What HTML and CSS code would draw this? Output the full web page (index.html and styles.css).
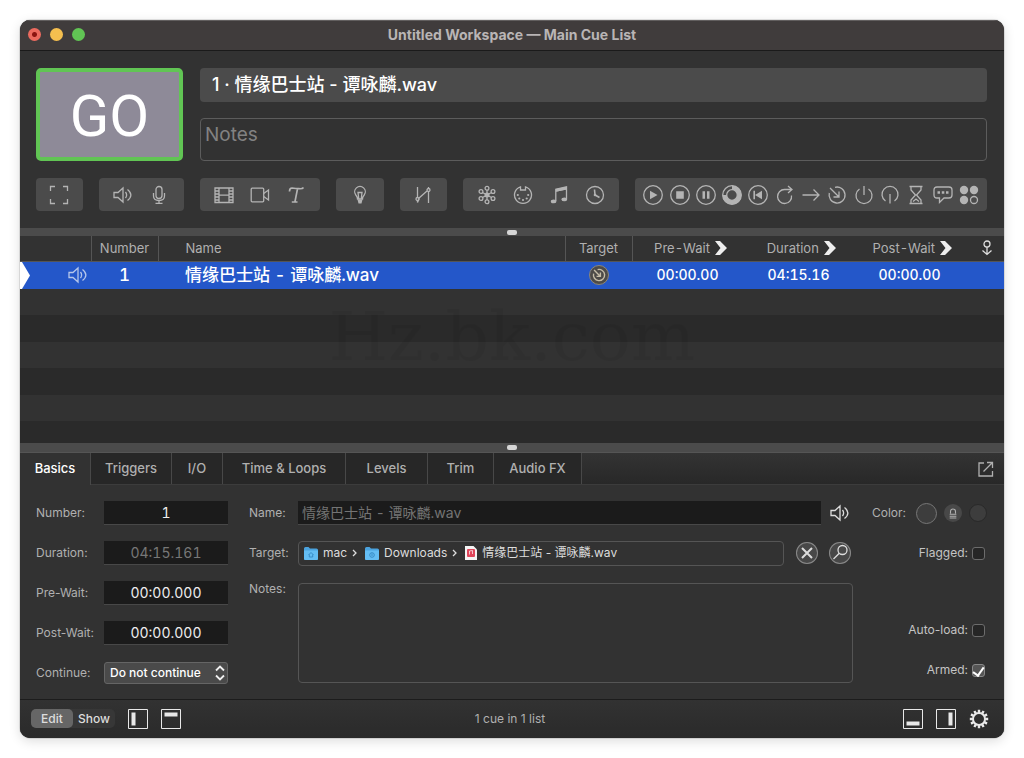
FILE: index.html
```html
<!DOCTYPE html>
<html lang="en">
<head>
<meta charset="utf-8">
<title>Untitled Workspace — Main Cue List</title>
<link rel="stylesheet" href="styles.css">
</head>
<body>
<svg class="defs" width="0" height="0" aria-hidden="true">
  <symbol id="speaker" viewBox="0 0 20 20"><path d="M1 7.500H5L10 3V17L5 12.500H1Z"/><path d="M12.500 7C14 9 14 11 12.500 13M14.500 4.500C19 8 19 12 14.500 15.500"/></symbol>
  <symbol id="target" viewBox="0 0 20 20"><path d="M8 2.300A8 8 0 1 1 2.300 8M3 3L12 12M12 6.500V12H6.500"/></symbol>
  <symbol id="chevron" viewBox="0 0 12 14"><path d="M0 0H5L12 7L5 14H0L5.500 7Z"/></symbol>
  <symbol id="folder" viewBox="0 0 14 13"><path d="M0 1.500Q0 0 1.500 0H4.500L6 1.500H12.500Q14 1.500 14 3V11.500Q14 13 12.500 13H1.500Q0 13 0 11.500Z" fill="#4ba3de"/><path d="M0 3.500H14V11.500Q14 13 12.500 13H1.500Q0 13 0 11.500Z" fill="#64bdf3"/></symbol>
</svg>
<main class="window">
  <header class="titlebar">
    <div class="lights">
      <button class="light close" aria-label="Close"></button>
      <button class="light minimize" aria-label="Minimize"></button>
      <button class="light zoom" aria-label="Zoom"></button>
    </div>
    <h1 class="title">Untitled Workspace — Main Cue List</h1>
  </header>

  <section class="transport">
    <button class="go">GO</button>
    <div class="standby">
      <div class="standby-name">1 · 情缘巴士站 - 谭咏麟.wav</div>
      <textarea class="standby-notes" placeholder="Notes" aria-label="Standby notes"></textarea>
    </div>
  </section>

  <nav class="toolbar" aria-label="Cue types">
    <div class="group g1">
      <button class="tool" aria-label="Group"><svg class="icon" viewBox="0 0 20 20"><path d="M1.500 6V1.500H6M14 1.500H18.500V6M18.500 14V18.500H14M6 18.500H1.500V14"/></svg></button>
    </div>
    <div class="group g2">
      <button class="tool" aria-label="Audio"><svg class="icon"><use href="#speaker"/></svg></button>
      <button class="tool" aria-label="Mic"><svg class="icon" viewBox="0 0 20 20"><rect x="7" y="1.500" width="6" height="12" rx="3"/><path d="M4.500 8V11Q4.500 15.500 10 15.500T15.500 11V8M10 15.500V18M6.500 18.300H13.500"/></svg></button>
    </div>
    <div class="group g3">
      <button class="tool" aria-label="Video"><svg class="icon" viewBox="0 0 20 20"><path d="M1 3H19V17.500H1ZM5 3V17.500M15 3V17.500M5 10.200H15M1 6H5M1 9H5M1 12H5M1 15H5M15 6H19M15 9H19M15 12H19M15 15H19"/></svg></button>
      <button class="tool" aria-label="Camera"><svg class="icon" viewBox="0 0 20 20"><rect x="1.200" y="3.200" width="12.500" height="13.600" rx="1"/><path d="M13.700 8.500L18.500 5V15L13.700 11.500"/></svg></button>
      <button class="tool" aria-label="Text"><svg class="icon" viewBox="0 0 20 20"><path stroke-width="1.700" d="M3.500 6.500Q3.500 3 6 3Q10 3.500 13 3.700Q16.500 4 17.500 2.500M11.500 3.800L9 16.500M5.800 17H11.500"/></svg></button>
    </div>
    <div class="group g4">
      <button class="tool" aria-label="Light"><svg class="icon" viewBox="0 0 20 20"><path d="M7.500 14Q7.500 12 5.800 10A5.300 5.300 0 1 1 14.200 10Q12.500 12 12.500 14ZM8.800 14L8 7.500H12L11.200 14"/><path class="solid" d="M7.500 14.500H12.500L11.500 18.500H8.500Z"/></svg></button>
    </div>
    <div class="group g5">
      <button class="tool" aria-label="Fade"><svg class="icon" viewBox="0 0 20 20"><path d="M4.500 2V12.500M5.500 13.500L14 6M15.500 7V18"/><circle cx="4.500" cy="14" r="1.500"/><circle cx="15.500" cy="5" r="1.500"/><path d="M4.500 15.500V17.500L6 14M15.500 3.500V2"/></svg></button>
    </div>
    <div class="group g6">
      <button class="tool" aria-label="Network"><svg class="icon" viewBox="0 0 20 20"><circle class="solid" cx="10" cy="10" r="2.500"/><path d="M10 5V15M5.500 7.500L14.500 12.500M5.500 12.500L14.500 7.500"/><circle cx="10" cy="3.200" r="1.900"/><circle cx="10" cy="16.800" r="1.900"/><circle cx="4" cy="6.500" r="1.900"/><circle cx="16" cy="6.500" r="1.900"/><circle cx="4" cy="13.500" r="1.900"/><circle cx="16" cy="13.500" r="1.900"/></svg></button>
      <button class="tool" aria-label="MIDI"><svg class="icon" viewBox="0 0 20 20"><path d="M7.500 1.800A8.500 8.500 0 1 0 12.500 1.800V5H7.500Z"/><g class="solid"><circle cx="4.800" cy="10" r="1.100"/><circle cx="15.200" cy="10" r="1.100"/><circle cx="6.300" cy="13.500" r="1.100"/><circle cx="13.700" cy="13.500" r="1.100"/><circle cx="10" cy="15" r="1.100"/></g></svg></button>
      <button class="tool" aria-label="MIDI file"><svg class="icon" viewBox="0 0 20 20"><path d="M6.800 16V4.200L17.500 1.800V14M6.800 6L17.500 3.800"/><path class="solid" d="M6.800 4L17.500 1.700V4.500L6.800 6.800Z"/><ellipse class="solid" cx="4.600" cy="16.400" rx="2.800" ry="1.900"/><ellipse class="solid" cx="15.300" cy="14.400" rx="2.800" ry="1.900"/></svg></button>
      <button class="tool" aria-label="Timecode"><svg class="icon" viewBox="0 0 20 20"><circle cx="10" cy="10" r="8.500"/><path stroke-width="1.600" d="M9.500 4.500L10 10L14.500 12.500"/><circle class="solid" cx="10" cy="10" r="1.300"/></svg></button>
    </div>
    <div class="group g7">
      <button class="tool" aria-label="Start"><svg class="icon" viewBox="0 0 20 20"><circle cx="10" cy="10" r="9.300"/><path class="solid" d="M7 5.700L14.500 10L7 14.300Z"/></svg></button>
      <button class="tool" aria-label="Stop"><svg class="icon" viewBox="0 0 20 20"><circle cx="10" cy="10" r="9.300"/><path class="solid" d="M6.200 6.200H13.800V13.800H6.200Z"/></svg></button>
      <button class="tool" aria-label="Pause"><svg class="icon" viewBox="0 0 20 20"><circle cx="10" cy="10" r="9.300"/><path class="solid" d="M6.500 6.200H9V13.800H6.500ZM11 6.200H13.500V13.800H11Z"/></svg></button>
      <button class="tool" aria-label="Load"><svg class="icon" viewBox="0 0 20 20"><circle cx="10" cy="10" r="9.300"/><circle cx="10" cy="10" r="5.300"/><path stroke-width="4.200" d="M10 2.600A7.400 7.400 0 1 1 2.600 10"/></svg></button>
      <button class="tool" aria-label="Reset"><svg class="icon" viewBox="0 0 20 20"><circle cx="10" cy="10" r="9.300"/><path class="solid" d="M14 5.700V14.300L7 10Z"/><path stroke-width="1.600" d="M6.200 5.700V14.300"/></svg></button>
      <button class="tool" aria-label="Devamp"><svg class="icon" viewBox="0 0 20 20"><path d="M16.500 10.500A7 7 0 1 1 9.500 4.500H17M13 1L17 4.500L13 8"/></svg></button>
      <button class="tool" aria-label="GoTo"><svg class="icon" viewBox="0 0 20 20"><path d="M1.500 10H18M12.500 4.500L18 10L12.500 15.500"/></svg></button>
      <button class="tool" aria-label="Target"><svg class="icon"><use href="#target"/></svg></button>
      <button class="tool" aria-label="Arm"><svg class="icon" viewBox="0 0 20 20"><path d="M5.500 4A8 8 0 1 0 14.500 4M10 1V10"/></svg></button>
      <button class="tool" aria-label="Disarm"><svg class="icon" viewBox="0 0 20 20"><path d="M5.500 16A8 8 0 1 1 14.500 16M10 9V18.500"/></svg></button>
      <button class="tool" aria-label="Wait"><svg class="icon" viewBox="0 0 20 20"><path d="M3.500 1.500H16.500M5 1.500V5L9.500 10L5 15V18.500M15 1.500V5L10.500 10L15 15V18.500M3.500 18.500H16.500M7 16.500L10 14L13 16.500"/></svg></button>
      <button class="tool" aria-label="Memo"><svg class="icon" viewBox="0 0 20 20"><path d="M4 2H16Q19 2 19 5V10Q19 13 16 13H11L6.500 17.500V13H4Q1 13 1 10V5Q1 2 4 2Z"/><path stroke-width="2.500" d="M4.500 7.500H7M8.800 7.500H11.300M13 7.500H15.500"/></svg></button>
      <button class="tool" aria-label="Script"><svg class="icon" viewBox="0 0 20 20"><g class="solid"><circle cx="5" cy="5" r="4.200"/><circle cx="15" cy="5" r="4.200"/><circle cx="5" cy="15" r="4.200"/></g><circle cx="15" cy="15" r="3.500"/></svg></button>
    </div>
  </nav>

  <div class="splitter"><span class="grip"></span></div>

  <section class="cues">
    <table class="cue-table">
      <colgroup><col class="c-status"><col class="c-num"><col><col class="c-num"><col class="c-time"><col class="c-time"><col class="c-time"><col class="c-flag"></colgroup>
      <thead>
        <tr>
          <th class="ruled" aria-label="Status"></th>
          <th class="ruled">Number</th>
          <th class="ruled name">Name</th>
          <th class="ruled">Target</th>
          <th class="time">Pre-Wait <svg class="chev"><use href="#chevron"/></svg></th>
          <th class="time">Duration <svg class="chev"><use href="#chevron"/></svg></th>
          <th class="time">Post-Wait <svg class="chev"><use href="#chevron"/></svg></th>
          <th aria-label="Continue"><svg class="anchor" viewBox="0 0 12 16"><circle cx="6" cy="4" r="3"/><path d="M6 7V14.500M1.500 10.500L6 14.500L10.500 10.500"/></svg></th>
        </tr>
      </thead>
      <tbody>
        <tr class="selected">
          <td><div class="status"><svg class="playhead" viewBox="0 0 10 27"><path d="M0 0H2L10 13.500L2 27H0Z"/></svg><svg class="icon"><use href="#speaker"/></svg></div></td>
          <td class="big">1</td>
          <td class="name">情缘巴士站 - 谭咏麟.wav</td>
          <td><span class="badge"><svg class="badge-icon"><use href="#target"/></svg></span></td>
          <td>00:00.00</td>
          <td>04:15.16</td>
          <td>00:00.00</td>
          <td></td>
        </tr>
      </tbody>
    </table>
    <div class="empty-rows"><span class="watermark">Hz.bk.com</span></div>
  </section>

  <div class="splitter tall"><span class="grip"></span></div>

  <nav class="tabs" aria-label="Inspector">
    <button class="tab active">Basics</button>
    <button class="tab t2">Triggers</button>
    <button class="tab t3">I/O</button>
    <button class="tab t4">Time &amp; Loops</button>
    <button class="tab t5">Levels</button>
    <button class="tab t6">Trim</button>
    <button class="tab t7">Audio FX</button>
    <button class="popout" aria-label="Open in new window"><svg class="icon" viewBox="0 0 20 20"><path d="M8 4H3V17H16.500V12M11 3.500H16.500V9M16.500 3.500L7.500 12.500"/></svg></button>
  </nav>

  <section class="inspector">
    <div class="fields">
      <label for="number">Number:</label><input class="field" id="number" value="1">
      <label for="duration">Duration:</label><input class="field dim" id="duration" value="04:15.161" readonly>
      <label for="prewait">Pre-Wait:</label><input class="field" id="prewait" value="00:00.000">
      <label for="postwait">Post-Wait:</label><input class="field" id="postwait" value="00:00.000">
      <label for="continue">Continue:</label>
      <div class="select-wrap">
        <select class="select" id="continue"><option>Do not continue</option></select>
        <svg class="updown" viewBox="0 0 10 16"><path d="M1 5.500L5 1.500L9 5.500M1 10.500L5 14.500L9 10.500"/></svg>
      </div>
    </div>

    <div class="details">
      <label for="name">Name:</label>
      <div class="line">
        <input class="field name-field" id="name" placeholder="情缘巴士站 - 谭咏麟.wav">
        <button class="plain" aria-label="Preview"><svg class="icon bright"><use href="#speaker"/></svg></button>
      </div>
      <span class="label">Target:</span>
      <div class="line">
        <div class="path">
          <svg class="folder" viewBox="0 0 14 13"><use href="#folder"/><path class="mark" d="M4.500 8L7 5.500L9.500 8M5.300 7.500V10H8.700V7.500"/></svg>
          <span>mac</span><svg class="sep" viewBox="0 0 5 8"><path d="M1 1L4 4L1 7"/></svg>
          <svg class="folder" viewBox="0 0 14 13"><use href="#folder"/><circle class="mark" cx="7" cy="8" r="2.300"/><path class="mark" d="M7 6.500V9"/></svg>
          <span>Downloads</span><svg class="sep" viewBox="0 0 5 8"><path d="M1 1L4 4L1 7"/></svg>
          <svg class="file" viewBox="0 0 12 14"><path d="M0 0H8.500L12 3.500V14H0Z" fill="#f4f4f4"/><rect x="2" y="3" width="8" height="8" rx="1" fill="#e0465b"/><path d="M4.500 8.500V5L7.500 4.500V8" fill="none" stroke="#fff" stroke-width=".7"/></svg>
          <span>情缘巴士站 - 谭咏麟.wav</span>
        </div>
        <button class="round" aria-label="Clear target"><svg class="round-icon" viewBox="0 0 22 22"><path stroke-width="2" d="M6 6L16 16M16 6L6 16"/></svg></button>
        <button class="round" aria-label="Find target"><svg class="round-icon" viewBox="0 0 22 22"><circle cx="13.500" cy="8" r="4.500"/><path d="M10.300 11.200L4.500 17"/></svg></button>
      </div>
      <label class="notes-label" for="notes">Notes:</label>
      <textarea class="notes" id="notes"></textarea>
    </div>

    <div class="options">
      <div class="color-line">
        <span class="label">Color:</span>
        <button class="swatch large" aria-label="Cue color"></button>
        <button class="swatch lock" aria-label="Lock second color"><svg class="lock-icon" viewBox="0 0 12 14"><path d="M3 7V4.500A3 3 0 0 1 9 4.500V7M2 8H10M2 10.200H10M2 12.400H10"/></svg></button>
        <button class="swatch second" aria-label="Second color"></button>
      </div>
      <label class="check">Flagged: <input type="checkbox"></label>
      <label class="check lower">Auto-load: <input type="checkbox"></label>
      <label class="check last">Armed: <input type="checkbox" checked></label>
    </div>
  </section>

  <footer class="footer">
    <div class="side">
      <div class="mode"><button class="mode-btn on">Edit</button><button class="mode-btn">Show</button></div>
      <button class="pane" aria-label="Left sidebar"><svg class="pane-icon" viewBox="0 0 20 20"><path d="M.5 .5H19.500V19.500H.5Z"/><path class="solid" d="M3.500 3.500H7.500V16.500H3.500Z"/></svg></button>
      <button class="pane" aria-label="Header"><svg class="pane-icon" viewBox="0 0 20 20"><path d="M.5 .5H19.500V19.500H.5Z"/><path class="solid" d="M3.500 3.500H16.500V7.500H3.500Z"/></svg></button>
    </div>
    <span class="count">1 cue in 1 list</span>
    <div class="side right">
      <button class="pane" aria-label="Inspector"><svg class="pane-icon" viewBox="0 0 20 20"><path d="M.5 .5H19.500V19.500H.5Z"/><path class="solid" d="M3.500 12.500H16.500V16.500H3.500Z"/></svg></button>
      <button class="pane" aria-label="Right sidebar"><svg class="pane-icon" viewBox="0 0 20 20"><path d="M.5 .5H19.500V19.500H.5Z"/><path class="solid" d="M12.500 3.500H16.500V16.500H12.500Z"/></svg></button>
      <button class="pane" aria-label="Settings"><svg class="pane-icon" viewBox="0 0 20 20"><circle cx="10" cy="10" r="6" stroke-width="2"/><path stroke-width="2.400" d="M10 .8V4M10 16V19.200M.8 10H4M16 10H19.200M5.400 2L7 4.800M13 15.200L14.600 18M2 5.400L4.800 7M15.200 13L18 14.600M2 14.600L4.800 13M15.200 7L18 5.400M5.400 18L7 15.200M13 4.800L14.600 2"/></svg></button>
    </div>
  </footer>
</main>
</body>
</html>
```
FILE: styles.css
```css
* { box-sizing: border-box; }
body {
  margin: 0;
  padding: 20px;
  background: #fff;
  color: #b0b0b0;
  font: 12px/16px Inter, "Noto Sans CJK SC", sans-serif;
}
button, input, textarea, select { font: inherit; color: inherit; }
button { padding: 0; border: 0; background: none; }
svg { display: block; fill: none; stroke: currentColor; stroke-width: 1.3; }
.defs { position: absolute; }
.solid { fill: currentColor; stroke: none; }
.icon { width: 20px; height: 20px; }

.window {
  display: flex;
  flex-direction: column;
  min-height: calc(100vh - 40px);
  border-radius: 10px;
  overflow: hidden;
  background: #323232;
  box-shadow: 0 0 1px #000, 0 3px 12px rgba(0, 0, 0, .14);
}

.titlebar {
  display: grid;
  grid-template-columns: 1fr auto 1fr;
  align-items: center;
  height: 31px;
  padding: 0 8px 1px;
  background: #403c3c;
  border-bottom: 1px solid #1a1a1a;
  box-shadow: inset 0 1px #625f5f;
}
.lights { display: flex; gap: 9px; }
.light { width: 13px; height: 13px; border-radius: 50%; }
.close { background: radial-gradient(circle, #8b1410 0 2px, #ec6a5e 3px); }
.minimize { background: #f5bf4f; }
.zoom { background: #61c554; }
.title { margin: 0; font-size: 14px; line-height: 20px; font-weight: 700; color: #b9b5b5; }

.transport { display: flex; gap: 17px; padding: 17px 17px 17px 16px; }
.go {
  width: 147px;
  padding-top: 2px;
  border: 4px solid #61c554;
  border-radius: 5px;
  background: #8e8a98;
  color: #fff;
  font: 400 58px/60px Roboto, sans-serif;
}
.standby { flex: 1; display: flex; flex-direction: column; gap: 16px; }
.standby-name {
  padding: 0 12px;
  border-radius: 4px;
  background: #4b4b4b;
  color: #fff;
  font-size: 18px;
  line-height: 34px;
  font-weight: 500;
}
.standby-notes {
  display: block;
  width: 100%;
  height: 43px;
  padding: 4px;
  border: 1px solid #5c5c5c;
  border-radius: 4px;
  background: none;
  resize: none;
  font-size: 19px;
  line-height: 24px;
}
.standby-notes::placeholder { color: #828282; opacity: 1; }

.toolbar { display: flex; gap: 16px; padding: 0 17px 17px 16px; }
.group {
  display: flex;
  justify-content: center;
  height: 33px;
  border-radius: 4px;
  background: #4b4b4b;
}
.g1, .g5 { flex: 47 1 0; }
.g2 { flex: 85 1 0; }
.g3 { flex: 121 1 0; }
.g4 { flex: 48 1 0; }
.g6 { flex: 157 1 0; }
.g7 { flex: 343 1 0; justify-content: space-between; padding: 0 5px; }
.tool { display: grid; place-items: center; width: 36px; color: #b4b4b4; }
.g7 .tool { width: 26px; }

.splitter { display: grid; place-items: center; height: 8px; background: #4b4b4b; }
.splitter.tall { height: 10px; border-bottom: 1px solid #555; }
.grip { width: 10px; height: 5px; border-radius: 2px; background: #d6d6d6; }

.cues { flex: 1; display: flex; flex-direction: column; }
.cue-table {
  width: 100%;
  table-layout: fixed;
  border-collapse: collapse;
  text-align: center;
  font-variant-numeric: tabular-nums;
}
.c-status { width: 71px; }
.c-num { width: 67px; }
.c-time { width: 111px; }
.c-flag { width: 39px; }
th { height: 25px; padding: 0; border-bottom: 1px solid #555; font-size: 13px; font-weight: 400; }
th.ruled { border-right: 1px solid #555; }
th.time { padding-left: 6px; }
th.name, td.name { padding-left: 27px; text-align: left; }
.chev { display: inline-block; width: 12px; height: 14px; margin-left: 2px; vertical-align: -2px; fill: #eee; stroke: none; }
.anchor { width: 12px; height: 16px; margin-left: 16px; color: #ddd; }
td { height: 27px; padding: 0; font-size: 14px; font-weight: 500; }
.selected { background: #2457c9; color: #fff; }
td.big, td.name { font-size: 17px; }
.status { display: flex; align-items: center; justify-content: space-between; padding-right: 3px; color: #b5c6ea; }
.playhead { width: 10px; height: 27px; fill: #fff; stroke: none; }
.badge {
  display: grid;
  place-items: center;
  width: 20px;
  height: 20px;
  margin: 0 auto;
  border: 1px solid #8d8778;
  border-radius: 50%;
  background: #4d4b48;
  color: #c5bda8;
}
.badge-icon { width: 14px; height: 14px; stroke-width: 2; }
.empty-rows {
  flex: 1;
  display: grid;
  place-items: start center;
  min-height: 154px;
  background: repeating-linear-gradient(#323232 0 26px, #2a2a2a 26px 53px);
}
.watermark { margin-top: 8px; color: rgba(0, 0, 0, .05); font: 68px/80px "DejaVu Serif", serif; }

.tabs { display: flex; height: 32px; border-bottom: 1px solid #3c3c3c; background: linear-gradient(#333, #282828); }
.tab { padding-bottom: 1px; border-right: 1px solid #484848; background: #272727; font-size: 13px; font-weight: 500; }
.tab.active { width: 71px; margin-bottom: -1px; padding-bottom: 2px; background: #323232; color: #fff; }
.t2 { width: 81px; }
.t3 { width: 51px; }
.t4 { width: 123px; }
.t5 { width: 82px; }
.t6 { width: 66px; }
.t7 { width: 88px; }
.popout { margin-left: auto; padding: 0 8px; }

.inspector { display: flex; padding: 16px 17px 14px 16px; }
.fields { display: grid; grid-template-columns: 68px 124px; grid-auto-rows: 24px; row-gap: 16px; align-items: center; margin-right: 21px; }
.field {
  width: 100%;
  height: 24px;
  padding: 0 4px;
  border: 0;
  border-bottom: 1px solid #484848;
  background: #1b1b1b;
  color: #eee;
  font-size: 14px;
  font-variant-numeric: tabular-nums;
  text-align: center;
}
.field.dim { color: #777; }
.field::placeholder { color: #747474; opacity: 1; }
.name-field { flex: 1; text-align: left; }
.select-wrap { display: grid; align-items: center; }
.select-wrap > * { grid-area: 1 / 1; }
.select {
  width: 100%;
  height: 22px;
  padding: 0 5px;
  border: 1px solid #656565;
  border-radius: 3px;
  background: #4a4a4a;
  color: #fff;
  font-weight: 500;
  appearance: none;
}
.updown { width: 10px; height: 16px; margin-right: 3px; justify-self: end; color: #eee; stroke-width: 1.800; pointer-events: none; }

.details {
  flex: 1;
  display: grid;
  grid-template-columns: 49px 1fr;
  grid-template-rows: 24px 24px 104px;
  row-gap: 16px;
  align-items: center;
}
.line { display: flex; align-items: center; gap: 9px; }
.plain { width: 23px; }
.bright { color: #ddd; }
.path {
  flex: 1;
  display: flex;
  align-items: center;
  gap: 5px;
  height: 25px;
  margin-right: 3px;
  padding: 0 5px;
  border: 1px solid #555;
  border-radius: 4px;
  color: #ddd;
}
.folder { width: 14px; height: 13px; stroke: none; }
.mark { fill: none; stroke: #368bc6; stroke-width: 1; }
.sep { width: 5px; height: 8px; margin-right: 3px; }
.file { width: 12px; height: 14px; stroke: none; }
.round { width: 22px; height: 22px; margin-right: 2px; border-radius: 50%; background: #484848; box-shadow: inset 0 0 0 1px #888; color: #ddd; }
.round-icon { width: 22px; height: 22px; }
.notes-label { align-self: start; }
.notes { width: 100%; height: 100px; border: 1px solid #555; border-radius: 4px; background: none; resize: none; }

.options {
  display: grid;
  grid-template-rows: repeat(5, 24px);
  row-gap: 16px;
  width: 134px;
  justify-items: end;
  align-items: center;
}
.color-line { display: flex; align-items: center; gap: 7px; }
.swatch { width: 18px; height: 18px; border-radius: 50%; background: #3d3d3d; }
.large { width: 21px; height: 21px; margin-left: 3px; border: 1px solid #777; }
.lock { display: grid; place-items: center; background: #484848; }
.lock-icon { width: 10px; height: 13px; }
.second { border: 1px solid #292929; }
.check { display: flex; align-items: center; gap: 4px; padding-right: 2px; line-height: 18px; color: #c4c4c4; }
.check input {
  appearance: none;
  width: 13px;
  height: 13px;
  margin: 0;
  border: 1px solid #6c6c6c;
  border-radius: 3px;
  background: #262626;
}
.check input:checked {
  display: grid;
  place-items: start center;
  border-color: #888;
  background: #555;
}
.check input:checked::after {
  content: "";
  width: 5px;
  height: 9px;
  border: solid #fff;
  border-width: 0 2px 2px 0;
  rotate: 35deg;
}
.lower { grid-row: 4; align-self: start; }
.last { grid-row: 5; align-self: start; }

.footer {
  display: grid;
  grid-template-columns: 1fr auto 1fr;
  align-items: center;
  height: 39px;
  padding: 0 15px 1px 11px;
  border-top: 1px solid #1c1c1c;
  background: linear-gradient(#323232, #2a2a2a);
}
.side { display: flex; align-items: center; gap: 13px; }
.right { justify-content: flex-end; }
.mode { display: flex; border-radius: 5px; background: #373737; }
.mode-btn { width: 42px; height: 19px; border-radius: 5px; color: #ddd; font-weight: 500; }
.mode-btn.on { background: #666; }
.pane { color: #e8e8e8; }
.pane-icon { width: 20px; height: 20px; stroke-width: 1; }
```
